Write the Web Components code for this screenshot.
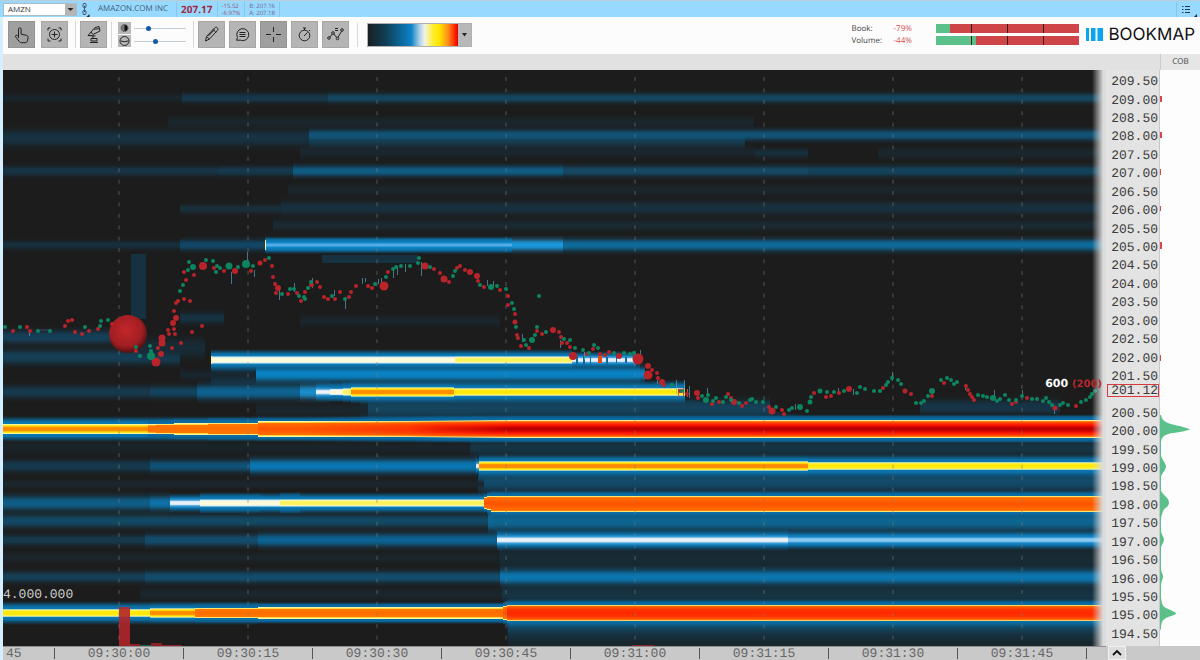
<!DOCTYPE html>
<html lang="en">
<head>
<meta charset="utf-8">
<title>Bookmap - AMZN</title>
<style>
    body {
        margin: 0;
        background: #fcfcfc;
        font-family: "Open Sans", "Liberation Sans", sans-serif;
        font-size: 8px;
        text-rendering: geometricPrecision;
        color: #444;
    }
</style>
</head>
<body>
<bookmap-app></bookmap-app>

<script>
const define = (name, html, setup) => {
    customElements.define(name, class extends HTMLElement {
        constructor() {
            super();
            this.attachShadow({ mode: 'open' });
            this.shadowRoot.innerHTML = html;
        }
        connectedCallback() {
            if (setup) setup(this, this.shadowRoot);
        }
    });
};

/* ---------- title bar ---------- */
define('title-bar', `
    <style>
        :host {
            display: flex;
            align-items: center;
            height: 16px;
            border-top: 1px solid #b9cdd9;
            background: #98daff;
            line-height: 14px;
            color: #3f607c;
        }
        .symbol {
            position: relative;
            width: 74px;
            height: 13px;
            margin-left: 3px;
            background: #fff;
        }
        select {
            appearance: none;
            width: 100%;
            height: 100%;
            box-sizing: border-box;
            border: 1px solid #a9bcc8;
            padding: 0 14px 0 4px;
            border-radius: 0;
            background: transparent;
            font: inherit;
            line-height: 10px;
            color: #333;
            display: block;
        }
        .symbol svg { position: absolute; right: 1px; top: 1px; pointer-events: none; }
        .link { margin: 0 4px; }
        .cell { padding: 0 8px 0 9px; height: 15px; border-right: 1px solid #8ac5e6; }
        .cell.name { padding: 0 8px 0 4px; }
        .cell.last { padding: 0 4px; font-weight: 700; font-size: 10px; color: #a3263f; }
        .cell.pair { padding: 1px 4px 0; font-size: 6px; line-height: 7px; color: #97506f; height: 14px; }
        .pair span { display: block; }
        .pair.quote { color: #6f5f90; }
        button {
            margin-left: auto;
            width: 24px;
            height: 15px;
            padding: 0;
            border: 0;
            border-left: 1px solid #8ac5e6;
            background: none;
        }
        button svg { display: block; margin: auto; }
    </style>
    <label class="symbol">
        <select aria-label="Symbol"><option>AMZN</option></select>
        <svg width="11" height="11" viewBox="0 0 11 11"><path d="M0 0h11v11H0z" fill="#b4b4b4"/><path d="M2.500 4h6L5.500 7z" fill="#222"/></svg>
    </label>
    <svg class="link" width="9" height="15" viewBox="0 0 9 15" fill="none" stroke="#3a5568">
        <rect x="2" y="1.500" width="3" height="4" rx="1"/><rect x="2" y="8.500" width="3" height="4" rx="1"/>
        <path d="M3.500 4v6"/><path d="M8.500 12v3h-3z" fill="#222" stroke="none"/>
    </svg>
    <span class="cell name">AMAZON.COM INC</span>
    <span class="cell last">207.17</span>
    <span class="cell pair"><span>-15.52</span><span>-6.97%</span></span>
    <span class="cell pair quote"><span>B: 207.16</span><span>A: 207.18</span></span>
    <button type="button" aria-label="Menu">
        <svg width="16" height="15" viewBox="0 0 16 15" stroke="#1e3d55" fill="none">
            <path d="M1 4.500h1.500M1 7.500h1.500M1 10.500h1.500M4 4.500h5M4 7.500h5M4 10.500h5"/>
            <path d="M16 12v3h-3z" fill="#222" stroke="none"/>
        </svg>
    </button>
`);

/* ---------- toolbar parts ---------- */
const icons = {
    hand: '<path d="M10.500 17V8.200a1.300 1.300 0 0 1 2.600 0v5l5.200 1.100c1.300.3 2 1 1.800 2.300l-.7 3.200c-.3 1.300-1 1.900-2.200 1.900h-3.500c-1.200 0-2-.5-2.700-1.500l-3.800-5c.8-1.300 2-1.200 3.300 0"/>',
    target: '<path d="M7 9.500V7h2.500M17.500 7H20v2.500M20 17.500V20h-2.500M9.500 20H7v-2.500"/><circle cx="13.500" cy="13.500" r="5"/><path d="M13.500 10.500v6M10.500 13.500h6"/>',
    microscope: '<path d="M15 6.500l4-1 1 4.500-7 3.500-2-2.500zM14 8.200l5.500-.5M11 11l-3 3.500 7.500.5M8 14.500h4M13 15v2.500M11 17.500h6v2.500h-6zM10 21.500h8"/>',
    pencil: '<path d="M7.500 20l1-4.500L16.500 7c1-1 2-1 2.800-.2.8.8.8 1.800 0 2.800L11.500 18zM15 8.500l3 3M8.500 15.500l3 2.500M10.500 15l6-6.500"/>',
    comment: '<path d="M8.500 16.500a6 6 0 1 1 3 2.700H7.500z"/><path d="M10.500 11.500h6M10.500 13.500h6M10.500 15.500h6"/>',
    cross: '<path d="M13.500 6v5M13.500 16v5M6 13.500h5M16 13.500h5"/>',
    timer: '<circle cx="13.500" cy="14.500" r="5.300"/><path d="M12 7h3M13.500 7v2M13 15l3.500-3.500M18 9l1 1"/>',
    path: '<circle cx="7" cy="17" r="1.300"/><circle cx="20" cy="9" r="1.300"/><circle cx="11" cy="12" r="1.300"/><circle cx="15.500" cy="17.500" r="1.300"/><path d="M8 16l2.300-3M11.800 13l3 3.500M16 16.300l3.500-6M13 7.500h3M13 9.500h3"/>'
};

define('tool-button', `
    <style>
        :host { display: block; }
        button {
            display: block;
            width: 27px;
            height: 27px;
            padding: 0;
            border: 1px solid #a6a6a6;
            background: #b5b5b5;
        }
        :host([active]) button { background: #9f9f9f; border-color: #939393; }
        svg { display: block; margin: -1px; }
    </style>
    <button type="button"><svg width="27" height="27" viewBox="0 0 27 27" fill="none" stroke="#222" stroke-linejoin="round"></svg></button>
`, (el, root) => {
    root.querySelector('svg').innerHTML = icons[el.getAttribute('icon')];
    root.querySelector('button').setAttribute('aria-label', el.getAttribute('icon'));
});

define('tool-slider', `
    <style>
        :host { display: block; }
        label { display: flex; align-items: center; gap: 3px; height: 13px; }
        .icon { width: 13px; height: 12px; background: #b8b8b8; }
        .icon ::slotted(svg) { display: block; margin: auto; }
        input { appearance: none; width: 52px; height: 12px; margin: 0; background: none; }
        input::-webkit-slider-runnable-track { height: 1px; background: #c4ccd4; }
        input::-webkit-slider-thumb {
            appearance: none;
            width: 5px;
            height: 5px;
            margin-top: -2px;
            border-radius: 50%;
            background: #1259a8;
        }
    </style>
    <label><span class="icon"><slot></slot></span><input type="range"></label>
`, (el, root) => {
    const input = root.querySelector('input');
    input.value = el.getAttribute('value');
    input.setAttribute('aria-label', el.getAttribute('label'));
});

define('ratio-bar', `
    <style>
        :host {
            display: grid;
            grid-template-columns: repeat(4, 1fr);
            height: 9px;
            background: linear-gradient(90deg, #5bc08a var(--buy), #cf4547 var(--buy));
        }
        i + i { border-left: 1px solid #3a1c1c; }
    </style>
    <i></i><i></i><i></i><i></i>
`);

define('tool-bar', `
    <style>
        :host { display: flex; align-items: center; height: 35px; padding: 0 5px 2px; background: #fcfcfc; }
        .group { display: flex; gap: 4px; padding: 0 4px; }
        .group.wide { gap: 6px; padding-left: 0; padding-right: 7px; }
        .group + .group { border-left: 1px solid #d8d8d8; }
        .sliders { display: block; padding: 0 7px 0 6px; }
        .tools { padding-right: 8px; }
        .tools tool-button + tool-button { margin: 0; }
        .ramp { padding-left: 9px; }
        .ramp button {
            display: flex;
            width: 105px;
            height: 24px;
            padding: 0;
            border: 1px solid #b0b0b0;
            background: #b8b8b8;
        }
        .ramp span {
            flex: 1;
            height: 22px;
            background: linear-gradient(90deg, #1a1f22, #0f3f58 20%, #0c6597 36%, #0d82c6 48%, #a8cde6 57%, #f2f2e8 63%, #ffee30 72%, #ffe600 79%, #ff8c1a 89%, #ff2a00 96%, #e60000);
        }
        .ramp svg { margin: auto 3px; }
        .stats { display: grid; grid-template-columns: 42px 42px 143px; row-gap: 3px; margin-left: auto; align-items: center; line-height: 9px; }
        .stats b { font-weight: 400; color: #d84a4a; }
        .logo { display: flex; align-items: center; gap: 6px; margin-left: 7px; font: 17px/20px Inter, sans-serif; color: #111; }
    </style>
    <div class="group wide"><tool-button icon="hand" active></tool-button><tool-button icon="target"></tool-button></div>
    <div class="group"><tool-button icon="microscope"></tool-button></div>
    <div class="group sliders">
        <tool-slider value="25" label="Contrast"><svg width="13" height="12" viewBox="0 0 13 12"><circle cx="6.500" cy="6" r="3.500" fill="#777" stroke="#333" stroke-dasharray="1 1"/><path d="M6.500 3a3 3 0 0 1 0 6z" fill="#111"/></svg></tool-slider>
        <tool-slider value="40" label="Size"><svg width="13" height="12" viewBox="0 0 13 12" fill="none" stroke="#222"><circle cx="6.500" cy="6" r="4.500"/><path d="M3 6q3.500 1.500 7 0"/></svg></tool-slider>
    </div>
    <div class="group tools">
        <tool-button icon="pencil"></tool-button><tool-button icon="comment"></tool-button>
        <tool-button icon="cross" active></tool-button><tool-button icon="timer"></tool-button><tool-button icon="path"></tool-button>
    </div>
    <div class="group ramp">
        <button type="button" aria-label="Colour map"><span></span><svg width="7" height="4" viewBox="0 0 7 4"><path d="M1 0h5L3.500 3.500z" fill="#222"/></svg></button>
    </div>
    <div class="stats">
        <span>Book:</span><b>-79%</b><ratio-bar style="--buy: 10%"></ratio-bar>
        <span>Volume:</span><b>-44%</b><ratio-bar style="--buy: 28%"></ratio-bar>
    </div>
    <div class="logo">
        <svg width="17" height="13" viewBox="0 0 17 13" fill="#0aa5ee"><path d="M0 0h3v13H0zM5 0h4.500v13H5zM11.500 0H17v13h-5.500z"/></svg>
        <span>BOOKMAP</span>
    </div>
`);

/* ---------- heat map ---------- */
// half profiles, from the outer edge to the centre: [offset, colour, opacity]
const profiles = {
    thinYellow: [[0, '#0a6090', 0], [.22, '#0b6da2'], [.34, '#0a7ab6'], [.36, '#fdf7b0'], [.41, '#ffee22'], [.5, '#ffe600']],
    cream: [[0, '#0a6090', 0], [.22, '#0b6da2'], [.32, '#0a7fbf'], [.36, '#cfe6f2'], [.42, '#fbfae0'], [.5, '#fffbd8']],
    paleYellow: [[0, '#0a6090', 0], [.22, '#0b6da2'], [.32, '#0a7fbf'], [.36, '#f4f4d8'], [.42, '#fff570'], [.5, '#fff050']],
    white: [[0, '#0a6090', 0], [.25, '#0b74ae'], [.36, '#3fa0dc'], [.42, '#d5e7f5'], [.5, '#f0f4fa']],
    paleBlue: [[0, '#0a6090', 0], [.25, '#0b74ae'], [.36, '#1c8acc'], [.43, '#7cc2ee'], [.5, '#8fcbf2']],
    sky: [[0, '#0a6090', 0], [.2, '#0b6da2'], [.36, '#0c86c8'], [.43, '#3c9ede'], [.5, '#62b4ea']],
    thinOrange: [[0, '#0a6090', 0], [.2, '#0b6da2'], [.3, '#0a7ab6'], [.32, '#fdf7b0'], [.36, '#ffe920'], [.4, '#ffd000'], [.42, '#ff9500'], [.5, '#ff8800']],
    orange: [[0, '#0a6090', 0], [.12, '#0b6498'], [.23, '#0a6fa8'], [.24, '#fdf7b0'], [.3, '#ffd83a'], [.31, '#ff7800'], [.5, '#ff6e00']],
    deepOrange: [[0, '#0a6090', 0], [.12, '#0b6498'], [.2, '#0a6fa8'], [.21, '#fdf7b0'], [.25, '#ffd83a'], [.27, '#ff7000'], [.5, '#ff5200']],
    redOrange: [[0, '#0a6090', 0], [.12, '#0b6498'], [.2, '#0a6fa8'], [.21, '#fdf7b0'], [.25, '#ffb020'], [.27, '#ff6000'], [.38, '#ff3200'], [.5, '#ff2800']],
    red: [[0, '#0a6090', 0], [.1, '#0b6498'], [.18, '#0a6fa8'], [.19, '#fdf7b0'], [.22, '#ffb020'], [.24, '#ff5a00'], [.36, '#ff1400'], [.43, '#d40000'], [.5, '#ad0000']]
};

// soft liquidity levels: [x1, x2, y, half height, colour]
const soft = [
    [3, 182, 98, 6, '#18262e'], [182, 328, 98, 8, '#15384b'], [328, 1106, 98, 8, '#144862'],
    [168, 754, 122, 9, '#1a262c'], [3, 309, 138, 13, '#163344'], [309, 745, 142, 11, '#15384a'], [309, 1106, 135, 9, '#10557a'],
    [300, 755, 152, 9, '#1a272e'], [755, 808, 153, 7, '#16303e'], [878, 1106, 153, 9, '#1a272e'],
    [3, 219, 171, 8, '#163447'], [219, 293, 171, 8, '#153a50'], [293, 563, 171, 9, '#0f5e88'], [563, 808, 171, 9, '#144965'], [808, 1106, 171, 9, '#13445e'],
    [288, 1106, 190, 9, '#1a262c'], [180, 281, 209, 7, '#18303c'], [281, 1106, 208, 11, '#17323f'], [273, 1106, 225, 9, '#192a33'],
    [3, 180, 245, 7, '#16303f'], [180, 265, 245, 9, '#11486a'], [512, 563, 245, 10, '#1b9be0'], [563, 1106, 245, 10, '#0d6d9e'],
    [300, 500, 321, 8, '#1a262d'], [180, 224, 318, 9, '#153444'],
    [3, 122, 337, 11, '#15405a'], [3, 180, 357, 12, '#144058'], [140, 205, 348, 16, '#172c37'],
    [211, 640, 372, 20, '#0f4058'], [180, 256, 375, 8, '#18262e'], [256, 645, 374, 11, '#0a85c8'],
    [3, 150, 392, 10, '#153a4e'], [150, 197, 392, 10, '#134460'], [197, 300, 392, 12, '#0d6494'], [300, 330, 392, 12, '#1a90d0'],
    [256, 368, 410, 11, '#1a262d'], [368, 640, 408, 14, '#15455f'], [640, 770, 408, 13, '#15425a'], [920, 1060, 407, 12, '#163548'],
    [3, 470, 448, 9, '#1a242a'], [470, 1106, 448, 10, '#163544'],
    [3, 150, 466, 10, '#153a4e'], [150, 250, 466, 10, '#10537a'], [250, 477, 466, 12, '#0a7ab8'], [478, 1106, 481, 16, '#124c6c'],
    [3, 484, 484, 7, '#1a262d'], [3, 150, 503, 12, '#0e5f8a'], [150, 170, 503, 12, '#0e74ac'],
    [3, 494, 521, 11, '#134a66'], [488, 1106, 521, 16, '#0d6794'],
    [3, 145, 540, 9, '#153a4e'], [145, 258, 540, 10, '#124e70'], [258, 497, 540, 11, '#0b6596'],
    [3, 498, 558, 8, '#1a252b'], [499, 1106, 558, 11, '#182c36'],
    [3, 145, 577, 9, '#154058'], [145, 500, 577, 10, '#124e6e'], [500, 1106, 577, 12, '#0b78b2'],
    [140, 502, 594, 10, '#1a262d'], [502, 1106, 594, 11, '#163443'], [508, 1106, 619, 24, '#0e5478']
];

// strong levels: [x1, x2, y, half height, profile]
const strong = [
    [265, 512, 245, 9, 'sky'],
    [211, 455, 360, 11, 'cream'], [455, 572, 360, 11, 'paleYellow'], [572, 636, 360, 9, 'white'],
    [316, 345, 392, 10, 'white'], [330, 351, 392, 10, 'cream'], [343, 352, 392, 11, 'paleYellow'], [351, 454, 392, 12, 'thinOrange'], [454, 685, 392, 12, 'thinYellow'],
    [3, 258, 429, 13, 'thinOrange'], [148, 158, 429, 9, 'orange'], [156, 175, 429, 10, 'orange'], [174, 210, 429, 11, 'orange'], [208, 259, 429, 12, 'orange'], [258, 500, 429, 13, 'deepOrange'],
    [476, 480, 466, 9, 'white'], [479, 808, 466, 12, 'thinOrange'], [808, 1106, 466, 12, 'thinYellow'],
    [170, 260, 503, 10, 'white'], [200, 300, 503, 11, 'cream'], [280, 485, 503, 11, 'paleYellow'], [484, 488, 503, 10, 'deepOrange'], [487, 492, 503, 12, 'deepOrange'], [491, 1106, 504, 14, 'deepOrange'],
    [497, 788, 540, 11, 'white'], [788, 1106, 540, 10, 'paleBlue'],
    [3, 150, 613, 12, 'thinYellow'], [150, 258, 613, 12, 'thinOrange'], [195, 258, 613, 10, 'orange'], [258, 505, 613, 11, 'orange'], [503, 508, 613, 12, 'deepOrange'], [507, 1106, 613, 14, 'redOrange']
];

// trades: x,y[,radius], sells first, then buys
const sells = '13,331 27,327 30,331 65,326 68,321 72,320 75,332 82,334 89,331 98,329 112,324 136,351 156,362,4.5 158,348 161,354,3 162,338,3.5 162,343,3.5 168,330 169,334 174,329 175,334 172,348 181,343 192,332 202,326 173,323,3 176,318,3 174,311 176,303 178,301 184,299 190,301 186,280 184,272 194,275 203,266,4 214,268 224,271 235,271,3 251,271 260,263,2.5 265,260 272,266 273,277 275,284 276,293 278,288,3 288,294 297,293 301,301 311,285 305,292 312,285 317,282 320,287 324,297 328,299 335,299 340,292 349,297 351,292 356,286 368,286 372,288 384,286,4.5 388,272 425,266,3.5 434,269 440,273 444,279,3.5 449,282 457,268 460,266 465,270 470,272,3 477,276,3 478,281 484,287 500,290 508,296 508,305 515,314 515,322,2.5 517,335 518,338 521,346 529,348 537,331 542,334 553,330,3 559,332 561,337 562,343 567,343 570,347 573,356,4 587,354 593,349 600,354 605,355 609,352 619,356,3 638,359,5.5 648,366,3 648,375,4.5 652,370 657,373 658,378 662,382,3 664,385 680,391 687,394 697,393,3 698,398 712,404 719,402 728,394 731,398 734,402,3 742,406 746,403 769,407 772,411,3.5 782,410 784,414 814,393 826,397 831,396 839,393 849,389,3 883,388 905,391,2.5 911,394 932,396 944,383 966,386 968,390 970,394 972,397 974,400 1012,404 1016,402 1027,398 1055,408,2.5 1076,406';
const buys = '5,327 20,327 38,331 50,331 85,327 100,326 101,321 108,320 136,347 140,356 150,346 151,351 151,356,4 180,291 183,285 188,270 189,262 193,267,3 206,260 213,261 217,266 220,268 216,272 229,266,3.5 238,267 246,264,4 253,266 269,258 282,294 290,289 294,289 299,296 305,299 308,288 304,297 311,282 332,296 345,299 375,284 386,277 393,269 396,267 401,266 410,266 418,263 419,258 430,267 453,276 455,271 480,285 491,287,3 497,286 506,289 512,303 514,309 516,327 524,340 526,345 532,340,3 535,335 537,327 546,332 539,296 564,339 570,340 575,348 583,350 589,353 594,345 598,348 614,353 624,353 630,354 634,353 672,385 682,391 702,396 706,400,3 708,395 713,401 716,398 723,402 726,397 731,400 739,403 750,400 752,399 756,402 763,402 776,407 789,410 792,408 800,407,3 807,411 810,402,2.5 811,397 820,391,2.5 827,392 834,392 844,391 857,393 860,387 865,389 874,391 880,391 886,385 888,382 892,378 898,380 901,384 916,403 921,403 924,401 928,396 932,391,3 941,380 947,378 951,380 954,384 957,382 978,395 983,396 987,397 993,398,3 997,401 1000,399 1005,395 1009,400 1016,400 1022,396 1032,399 1037,399 1043,401 1046,398 1049,402 1052,405 1060,405 1063,403 1068,405 1081,402 1086,400 1090,397 1092,394 1095,391';

// resting orders that flicker round the price: x,y,height
const flickers = '29,331,5 231,272,12 247,252,14 254,270,7 279,290,10 294,283,9 312,278,10 334,290,6 345,297,12 362,278,6 365,278,4 378,279,5 381,278,5 393,268,10 397,266,9 405,264,8 421,262,14 487,280,6 493,281,5 522,334,8 560,340,8 584,352,8 640,350,8 657,376,8 676,380,14 684,380,14 689,386,12 707,388,6 795,404,6 838,388,6 853,389,6 892,372,9 965,384,6 994,390,8 1022,390,8 1054,409,5';

const band = ([x1, x2, y, h], fill) => `<rect x="${x1}" y="${y - h}" width="${x2 - x1}" height="${h * 2}" fill="${fill}"/>`;
const stop = ([at, color, opacity = 1]) => `<stop offset="${at}" stop-color="${color}" stop-opacity="${opacity}"/>`;
const gradient = (id, half) => {
    const rest = half.slice(0, -1).reverse().map(([at, ...s]) => [1 - at, ...s]);
    return `<linearGradient id="${id}" x2="0" y2="1">${half.concat(rest).map(stop).join('')}</linearGradient>`;
};
const dots = (list, fill) => list.split(' ').map(d => {
    const [x, y, r = 2] = d.split(',');
    return `<circle cx="${x}" cy="${y}" r="${r}" fill="${fill}"/>`;
}).join('');
// fades the 200 level in between two times
const mask = (id, x1, x2) => `<mask id="${id}" maskUnits="userSpaceOnUse" x="3" y="410" width="1103" height="40">
    <rect x="${x1}" y="410" width="${x2 - x1}" height="40" fill="url(#heat)"/><rect x="${x2}" y="410" width="${1106 - x2}" height="40" fill="#fff"/></mask>`;

const drawHeatmap = () => {
    const colors = [...new Set(soft.map(s => s[4]))];
    const defs = colors.map(c => gradient('s' + c.slice(1), [[0, c, 0], [.18, c, .25], [.36, c, .85], [.5, c]])).join('')
        + Object.entries(profiles).map(([id, p]) => gradient(id, p)).join('');
    let out = `<defs>${defs}
        <radialGradient id="ball" cx=".45" cy=".4" r=".6"><stop offset="0" stop-color="#c4262a"/><stop offset=".7" stop-color="#a01e22"/><stop offset="1" stop-color="#541012"/></radialGradient>
        <linearGradient id="heat"><stop offset="0" stop-color="#000"/><stop offset="1" stop-color="#fff"/></linearGradient>
        ${mask('warm', 300, 440)}${mask('hot', 410, 510)}
    </defs>`;
    out += '<path d="M470 436L484 500L497 540L502 580L508 646H1106V436z" fill="#18262e"/>';
    out += '<path d="M131 254h15v65h-15zM322 255h96v8h-96z" fill="#163241"/>';
    out += '<path d="M360 400H690L800 415H1106V422H360z" fill="#162d39"/>';
    out += soft.map(s => band(s, `url(#s${s[4].slice(1)})`)).join('');
    out += strong.map(s => band(s, `url(#${s[4]})`)).join('');
    out += `<g mask="url(#warm)">${band([300, 1106, 429, 14], 'url(#redOrange)')}</g>`;
    out += `<g mask="url(#hot)">${band([410, 1106, 429, 14], 'url(#red)')}</g>`;
    out += '<path d="M265 240h1v10h-1zM211 356h1v8h-1z" fill="#fff28a"/>';
    // order book flicker where the price meets the 202 and 201 levels
    out += '<path d="M576 356h2v8h-2zM583 355h2v11h-2zM590 357h1v7h-1zM606 357h2v7h-2zM616 356h1v7h-1zM625 357h2v6h-2z" fill="#0d6a9e"/>';
    out += '<path d="M598 356h4v7h-4zM678 389h1v8h-1zM683 388h1v8h-1zM687 389h1v8h-1z" fill="#e84a10"/>';
    out += flickers.split(' ').map(f => {
        const [x, y, h] = f.split(',');
        return `<rect x="${x}" y="${y}" width="1" height="${h}" fill="#5fb4d6" opacity=".6"/>`;
    }).join('');
    // volume
    out += '<path d="M119 607h11v39h-11z" fill="#b0262a" opacity=".9"/><path d="M130 644h10v2h-10zM151 643h11v3h-11zM162 645h20v1h-20zM632 645h22v1h-22z" fill="#8c2024"/><path d="M140 645h11v1h-11z" fill="#11634a"/>';
    for (let i = 0; i < 8; i++) {
        out += `<path d="M${119 + i * 129} 77V646" stroke="#7d7d7d" stroke-opacity=".6" stroke-dasharray="4 7.400"/>`;
    }
    out += '<circle cx="128" cy="334" r="19" fill="url(#ball)"/><path d="M38 330H50M1095 389H1106" stroke="#446" />';
    out += dots(sells, '#b8242a') + dots(buys, '#0c8560');
    return out;
};

define('heat-map', `
    <style>
        :host { display: block; position: relative; background: #1c1c1c; overflow: hidden; }
        svg { position: absolute; inset: 0; width: 100%; height: 100%; }
        .fade { position: absolute; inset: 0 0 0 auto; width: 14px; background: linear-gradient(90deg, transparent, #dcdcdc 80%); }
        .scale, .size { position: absolute; white-space: pre; }
        .scale { left: 0; top: 90%; font: 13px/14px "Liberation Mono", monospace; color: #ccc; }
        .size { right: 4px; top: 53.500%; font: 700 11px/12px "DejaVu Sans", sans-serif; color: #fff; }
        .size span { color: #b8282c; font-size: 10px; }
    </style>
    <svg viewBox="3 70 1103 576" preserveAspectRatio="none"></svg>
    <div class="fade"></div>
    <div class="scale">4.000.000</div>
    <div class="size">600 <span>(200)</span></div>
`, (el, root) => {
    root.querySelector('svg').innerHTML = drawHeatmap();
});

/* ---------- axes ---------- */
define('price-axis', `
    <style>
        :host {
            display: flex;
            flex-direction: column;
            position: relative;
            box-sizing: border-box;
            padding: 3px 1px 2px 0;
            border-right: 1px solid #c8c8c8;
            background: #e3e3e3;
            font: 13px/14px "Liberation Mono", monospace;
            color: #3c3c3c;
            text-align: right;
        }
        div { flex: 1; display: flex; align-items: center; justify-content: flex-end; }
        b {
            position: absolute;
            right: 0;
            top: 54.500%;
            width: 50px;
            border: 1px solid #d8393c;
            background: #e3e3e3;
            font-weight: 400;
            line-height: 11px;
        }
    </style>
`, (el, root) => {
    for (let price = 209.5; price >= 194.5; price -= 0.5) {
        const row = document.createElement('div');
        // the last price covers this level
        row.textContent = price === 201 ? '' : price.toFixed(2);
        root.append(row);
    }
    const last = document.createElement('b');
    last.textContent = el.getAttribute('last');
    root.append(last);
});

define('cob-panel', `
    <style>
        :host { display: block; position: relative; background: #fdfdfd; }
        svg { position: absolute; inset: 0; width: 100%; height: 100%; }
    </style>
    <svg viewBox="1160 70 40 576" preserveAspectRatio="none">
        <path fill="#5bc08a" d="M1160 415h1c1 6 5 8 14 10 8 2 13 3 15 4.500-3 1.500-14 3-20 4-5 1-8 3-9 8v14c1 4 5 8 5 11s-4 7-5 10v14c1 4 8 7 8 12s-5 5-6 9c-1 2-2 5-2 9v11c1 4 3 6 3 8s-2 5-3 8v21c0 4 2 5 2 8s-2 5-2 9v12c1 8 2 9 6 11 5 2 9 4 9 5s-6 3-9 4c-4 2-5 3-6 9v3h-1z"/>
        <path fill="#d8484a" d="M1160 96h2v6h-2zM1160 132h2v6h-2zM1160 169h1v6h-1zM1160 206h1v5h-1zM1160 242h2v7h-2zM1160 355h1v6h-1z"/>
    </svg>
`);

define('time-axis', `
    <style>
        :host {
            display: grid;
            grid-template-columns: 52fr repeat(8, 129fr) 19fr;
            align-items: center;
            height: 14px;
            box-sizing: border-box;
            border-top: 1px solid #8f8f8f;
            background: #c9c9c9;
            font: 13px/13px "Liberation Mono", monospace;
            color: #666;
            text-align: center;
        }
        span { border-right: 1px solid #555; height: 11px; line-height: 12px; }
        span:first-child { text-align: left; padding-left: 3px; }
    </style>
`, (el, root) => {
    el.getAttribute('labels').split(' ').forEach(label => {
        const cell = document.createElement('span');
        cell.textContent = label;
        root.append(cell);
    });
    const tick = document.createElement('span');
    tick.style.borderRightWidth = 0;
    root.append(tick);
    // the style element comes first in the root, so the first label is addressed here
    root.querySelector('span').style.cssText = 'text-align: left; padding-left: 3px';
});

/* ---------- application ---------- */
define('bookmap-app', `
    <style>
        :host { display: flex; flex-direction: column; min-height: 100vh; }
        .window { flex: 1; display: flex; flex-direction: column; border-left: 3px solid #d6efff; }
        .chart {
            flex: 1;
            display: grid;
            grid-template-columns: 1fr 54px 40px;
            grid-template-rows: 16px minmax(300px, 1fr) 14px;
        }
        .strip { grid-column: span 2; background: #e1e1e1; }
        .cob { background: #e6e6e6; border-left: 1px solid #ccc; text-align: center; line-height: 16px; }
        .corner { grid-column: span 2; display: flex; background: #c9c9c9; padding-left: 2px; }
        .corner button {
            width: 18px;
            height: 14px;
            padding: 0;
            border: 1px solid #f2f2f2;
            background: #dcdcdc;
        }
        .corner svg { display: block; margin: auto; }
    </style>
    <title-bar></title-bar>
    <div class="window">
        <tool-bar></tool-bar>
        <div class="chart">
            <div class="strip"></div>
            <div class="cob">COB</div>
            <heat-map></heat-map>
            <price-axis last="201.12"></price-axis>
            <cob-panel></cob-panel>
            <time-axis labels="45 09:30:00 09:30:15 09:30:30 09:30:45 09:31:00 09:31:15 09:31:30 09:31:45"></time-axis>
            <div class="corner">
                <button type="button" aria-label="Expand"><svg width="10" height="8" viewBox="0 0 10 8"><path d="M1 6l4-4 4 4" fill="none" stroke="#111" stroke-width="1.800"/></svg></button>
            </div>
        </div>
    </div>
`);
</script>
</body>
</html>
